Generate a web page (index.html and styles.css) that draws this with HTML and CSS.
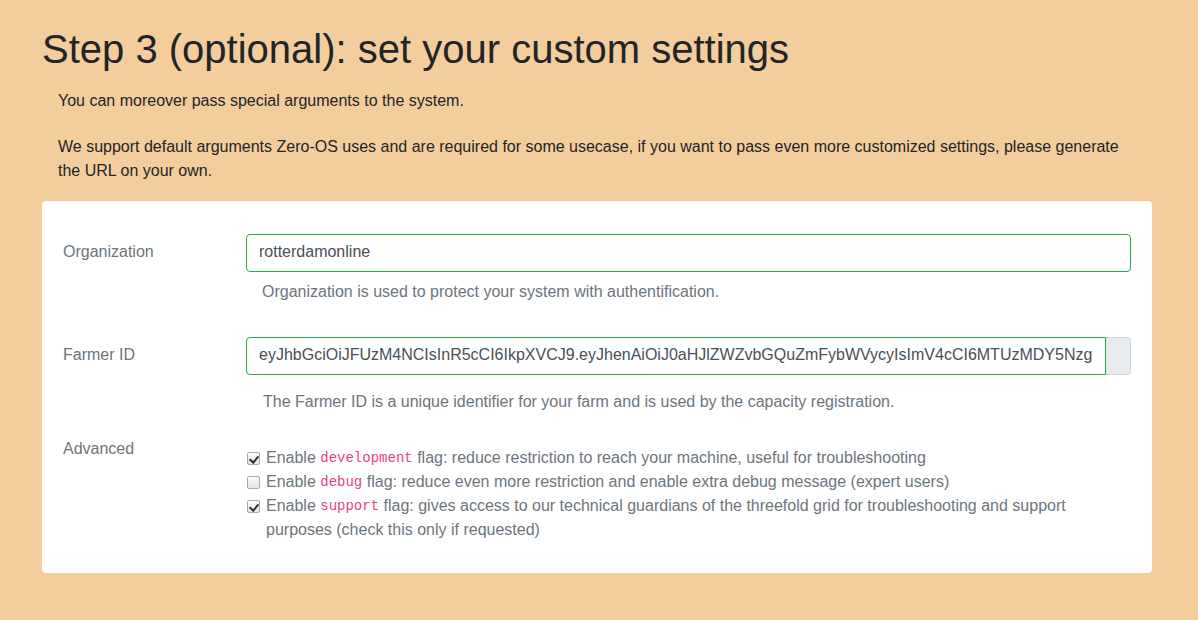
FILE: index.html
```html
<!DOCTYPE html>
<html>
<head>
<meta charset="utf-8">
<link rel="stylesheet" href="styles.css">
</head>
<body>
<div class="container">
  <h1 class="title">Step 3 (optional): set your custom settings</h1>
  <p class="lead-1">You can moreover pass special arguments to the system.</p>
  <p class="lead-2">We support default arguments Zero-OS uses and are required for some usecase, if you want to pass even more customized settings, please generate the URL on your own.</p>

  <div class="card">
    <div class="row row-org">
      <label class="col-label">Organization</label>
      <div class="col-field">
        <div class="input valid">rotterdamonline</div>
        <div class="help help-org">Organization is used to protect your system with authentification.</div>
      </div>
    </div>

    <div class="row row-farmer">
      <label class="col-label">Farmer ID</label>
      <div class="col-field">
        <div class="input-group">
          <div class="input valid grow">eyJhbGciOiJFUzM4NCIsInR5cCI6IkpXVCJ9.eyJhenAiOiJ0aHJlZWZvbGQuZmFybWVycyIsImV4cCI6MTUzMDY5Nzg</div>
          <div class="append"></div>
        </div>
        <div class="help help-farmer">The Farmer ID is a unique identifier for your farm and is used by the capacity registration.</div>
      </div>
    </div>

    <div class="row row-adv">
      <label class="col-label">Advanced</label>
      <div class="col-field checks">
        <div class="check"><input type="checkbox" checked><span>Enable <code>development</code> flag: reduce restriction to reach your machine, useful for troubleshooting</span></div>
        <div class="check"><input type="checkbox"><span>Enable <code>debug</code> flag: reduce even more restriction and enable extra debug message (expert users)</span></div>
        <div class="check"><input type="checkbox" checked><span>Enable <code>support</code> flag: gives access to our technical guardians of the threefold grid for troubleshooting and support purposes (check this only if requested)</span></div>
      </div>
    </div>
  </div>
</div>
</body>
</html>
```

FILE: styles.css
```css
html, body {
  margin: 0;
  padding: 0;
}
body {
  background: #f3ce9c;
  font-family: "Liberation Sans", Arial, sans-serif;
  font-size: 16px;
  line-height: 24px;
  color: #212529;
  width: 1198px;
  height: 620px;
  overflow: hidden;
}
.container {
  width: 1110px;
  margin-left: 42px;
}
.title {
  margin: 25px 0 0 0;
  font-size: 40px;
  line-height: 48px;
  font-weight: 400;
  color: #212529;
}
.lead-1 {
  margin: 16px 16px 0 16px;
}
.lead-2 {
  margin: 22px 16px 0 16px;
}
.card {
  margin-top: 18px;
  background: #fff;
  border-radius: 4px;
  padding: 33px 21px 31px 21px;
}
.row {
  display: flex;
}
.col-label {
  width: 183px;
  flex: none;
  padding-top: 6px;
  color: #6c757d;
}
.col-field {
  flex: 1;
  min-width: 0;
}
.input {
  height: 38px;
  box-sizing: border-box;
  border: 1px solid #28a745;
  border-radius: 4px;
  padding: 5px 12px 7px 12px;
  color: #495057;
  white-space: nowrap;
  overflow: hidden;
  background: #fff;
}
.input-group {
  display: flex;
}
.input.grow {
  flex: 1;
  min-width: 0;
  border-radius: 4px 0 0 4px;
}
.append {
  width: 25px;
  height: 38px;
  box-sizing: border-box;
  background: #e9ecef;
  border: 1px solid #ced4da;
  border-left: none;
  border-radius: 0 4px 4px 0;
}
.help {
  color: #6c757d;
}
.help-org {
  margin: 8px 0 0 16px;
}
.row-farmer {
  margin-top: 33px;
}
.help-farmer {
  margin: 15px 0 0 17px;
}
.row-adv {
  margin-top: 17px;
}
.checks {
  padding-top: 15px;
  color: #6c757d;
}
.check {
  display: flex;
  align-items: flex-start;
}
.check input {
  -webkit-appearance: none;
  appearance: none;
  flex: none;
  width: 13px;
  height: 13px;
  margin: 6px 6px 0 1px;
  box-sizing: border-box;
  border: 1px solid #a9a9a9;
  border-radius: 2px;
  background: linear-gradient(#fcfcfc, #e4e4e4);
  position: relative;
}
.check input:checked::after {
  content: "";
  position: absolute;
  left: 3px;
  top: 1px;
  width: 4px;
  height: 7px;
  border: solid #333;
  border-width: 0 2px 2px 0;
  transform: rotate(40deg);
}
code {
  font-family: "Liberation Mono", "DejaVu Sans Mono", monospace;
  font-size: 14px;
  line-height: 1;
  color: #e83e8c;
  position: relative;
  top: -1px;
}
```
